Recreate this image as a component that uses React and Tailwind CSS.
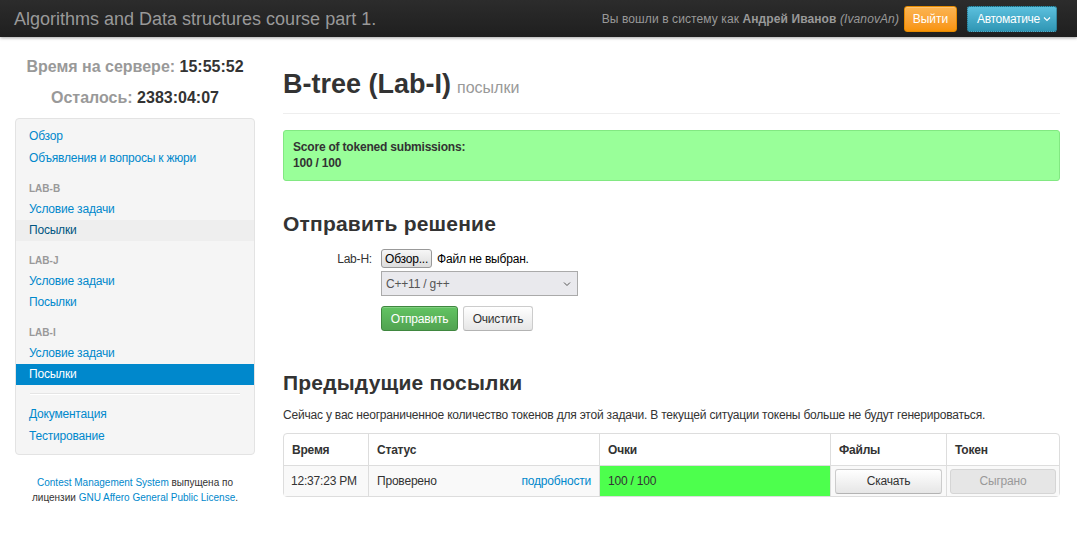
import React from 'react';

const NavLink = ({ children, active, hover }) => (
  <a
    className={`block px-[13px] h-[21px] leading-[21px] ${
      active ? 'bg-[#0088cc] text-white' : hover ? 'bg-[#eeeeee] text-[#005580]' : 'text-[#0088cc]'
    }`}
  >
    {children}
  </a>
);

const NavHeader = ({ children }) => (
  <div className="px-[13px] pt-[9px] pb-[1px] h-[30px] leading-[21px] text-[10px] font-bold text-[#999999] uppercase tracking-normal">
    {children}
  </div>
);

export default function App() {
  return (
    <div className="min-h-[543px] bg-white text-[#333333] text-[12px]" style={{ fontFamily: '"Liberation Sans", Arial, sans-serif' }}>
      {/* navbar */}
      <div className="h-[37px] flex items-center bg-gradient-to-b from-[#2c2c2c] to-[#1f1f1f] shadow-[0_1px_3px_rgba(0,0,0,0.35)]">
        <div className="pl-[14px] text-[18px] text-[#999999] leading-none">
          Algorithms and Data structures course part 1.
        </div>
        <div className="ml-auto flex items-center pr-[20px]">
          <span className="text-[#999999] text-[12px] mr-[5px] tracking-[0.1px]">
            Вы вошли в систему как <b>Андрей Иванов</b> <i>(IvanovAn)</i>
          </span>
          <button className="h-[26px] w-[53px] rounded-[3px] bg-gradient-to-b from-[#fbb450] to-[#f89406] border border-[#e58a00] text-white text-[12px] shadow-[inset_0_1px_0_rgba(255,255,255,0.2)]">
            Выйти
          </button>
          <button className="ml-[10px] h-[26px] w-[90px] pl-[9px] pr-[5px] flex items-center rounded-[3px] bg-gradient-to-b from-[#5bc0de] to-[#2f96b4] border border-dotted border-[#1f6377] text-white text-[12px] whitespace-nowrap">
            <span className="tracking-[-0.3px]">Автоматиче</span>
            <svg width="8" height="6" viewBox="0 0 8 6" className="ml-auto">
              <path d="M1 1.5 L4 4.5 L7 1.5" fill="none" stroke="white" strokeWidth="1.1" />
            </svg>
          </button>
        </div>
      </div>

      <div className="flex pl-[15px] pr-[17px]">
        {/* sidebar */}
        <div className="w-[240px] shrink-0 tracking-[-0.2px]">
          <div className="pt-[14px] text-center font-bold text-[16px] leading-[31px] tracking-normal">
            <div><span className="text-[#999999]">Время на сервере:</span> 15:55:52</div>
            <div><span className="text-[#999999]">Осталось:</span> 2383:04:07</div>
          </div>
          <div className="mt-[5px] bg-[#f5f5f5] border border-[#e3e3e3] rounded-[4px] pt-[7px] pb-[7px]">
            <NavLink>Обзор</NavLink>
            <div className="h-px" />
            <NavLink>Объявления и вопросы к жюри</NavLink>
            <NavHeader>LAB-B</NavHeader>
            <NavLink>Условие задачи</NavLink>
            <NavLink hover>Посылки</NavLink>
            <NavHeader>LAB-J</NavHeader>
            <NavLink>Условие задачи</NavLink>
            <NavLink>Посылки</NavLink>
            <NavHeader>LAB-I</NavHeader>
            <NavLink>Условие задачи</NavLink>
            <NavLink active>Посылки</NavLink>
            <div className="mx-[14px] mt-[8px] mb-[9px] h-[2px] border-t border-[#e5e5e5] border-b border-b-white" />
            <NavLink>Документация</NavLink>
            <div className="h-px" />
            <NavLink>Тестирование</NavLink>
          </div>
          <div className="mt-[20px] text-center text-[10px] leading-[15px] text-[#333333] tracking-normal">
            <a className="text-[#0088cc]">Contest Management System</a> выпущена по
            <br />
            лицензии <a className="text-[#0088cc]">GNU Affero General Public License</a>.
          </div>
        </div>

        {/* main */}
        <div className="ml-[28px] flex-1">
          <div className="pt-[27px] pb-[9px] border-b border-[#eeeeee] flex items-baseline">
            <h1 className="text-[27px] font-bold leading-[40px]">B-tree (Lab-I)</h1>
            <span className="ml-[6px] text-[16px] text-[#999999]">посылки</span>
          </div>

          <div className="mt-[16px] h-[51px] bg-[#99ff99] border border-[#82e882] rounded-[3px] px-[9px] pt-[8px] text-[12px] font-bold leading-[16px] tracking-[-0.2px]">
            <div>Score of tokened submissions:</div>
            <div>100 / 100</div>
          </div>

          <h2 className="mt-[30px] text-[21px] font-bold leading-[26px] tracking-[0.2px]">Отправить решение</h2>

          <div className="mt-[12px] tracking-[-0.2px]">
            <div className="flex items-center h-[19px]">
              <label className="w-[98px] text-right pr-[9px] text-[12px]">Lab-H:</label>
              <button className="h-[19px] px-[3px] border border-[#999999] rounded-[3px] bg-gradient-to-b from-[#f6f6f6] to-[#dddddd] text-[12px] leading-none text-black">
                Обзор...
              </button>
              <span className="ml-[5px] text-[12px] text-black">Файл не выбран.</span>
            </div>
            <div className="ml-[98px] mt-[3px] w-[197px] h-[25px] border border-[#aaaaaa] bg-[#e9e9ed] flex items-center px-[4px] text-[12px] text-[#555555]">
              <span>C++11 / g++</span>
              <svg width="8" height="6" viewBox="0 0 8 6" className="ml-auto mr-[2px]">
                <path d="M1 1.5 L4 4.5 L7 1.5" fill="none" stroke="#555" strokeWidth="1" />
              </svg>
            </div>
            <div className="ml-[98px] mt-[10px] flex gap-[5px]">
              <button className="h-[25px] w-[77px] rounded-[3px] bg-gradient-to-b from-[#62c462] to-[#51a351] border border-[#3f873f] text-white text-[12px] shadow-[inset_0_1px_0_rgba(255,255,255,0.2)]">
                Отправить
              </button>
              <button className="h-[25px] w-[70px] rounded-[3px] bg-gradient-to-b from-white to-[#e6e6e6] border border-[#cccccc] border-b-[#b3b3b3] text-[#333333] text-[12px]">
                Очистить
              </button>
            </div>
          </div>

          <h2 className="mt-[39px] text-[21px] font-bold leading-[26px] tracking-[0.2px]">Предыдущие посылки</h2>
          <p className="mt-[10px] text-[12px] leading-[18px] tracking-[-0.2px]">
            Сейчас у вас неограниченное количество токенов для этой задачи. В текущей ситуации токены больше не будут генерироваться.
          </p>

          <table className="mt-[9px] w-full border-separate border-spacing-0 border border-[#dddddd] rounded-[4px] text-[12px] tracking-[-0.2px]">
            <thead>
              <tr className="h-[31px]">
                <th className="w-[84px] px-[8px] text-left font-bold">Время</th>
                <th className="w-[231px] px-[8px] text-left font-bold border-l border-[#dddddd]">Статус</th>
                <th className="w-[231px] px-[8px] text-left font-bold border-l border-[#dddddd]">Очки</th>
                <th className="w-[116px] px-[8px] text-left font-bold border-l border-[#dddddd]">Файлы</th>
                <th className="px-[8px] text-left font-bold border-l border-[#dddddd]">Токен</th>
              </tr>
            </thead>
            <tbody>
              <tr className="h-[31px] bg-[#f9f9f9]">
                <td className="px-[7px] border-t border-[#dddddd] whitespace-nowrap">12:37:23 PM</td>
                <td className="px-[8px] border-t border-l border-[#dddddd]">
                  <div className="flex">
                    <span>Проверено</span>
                    <a className="ml-auto text-[#0088cc]">подробности</a>
                  </div>
                </td>
                <td className="px-[8px] border-t border-l border-[#dddddd] bg-[#4dff4d]">100 / 100</td>
                <td className="px-[4px] border-t border-l border-[#dddddd]">
                  <button className="w-full h-[25px] rounded-[3px] bg-gradient-to-b from-white to-[#e6e6e6] border border-[#cccccc] border-b-[#b3b3b3] text-[#333333] text-[12px]">
                    Скачать
                  </button>
                </td>
                <td className="px-[3px] border-t border-l border-[#dddddd]">
                  <button className="w-full h-[25px] rounded-[3px] bg-[#e6e6e6] border border-[#d5d5d5] text-[#999999] text-[12px]">
                    Сыграно
                  </button>
                </td>
              </tr>
            </tbody>
          </table>
        </div>
      </div>
    </div>
  );
}
